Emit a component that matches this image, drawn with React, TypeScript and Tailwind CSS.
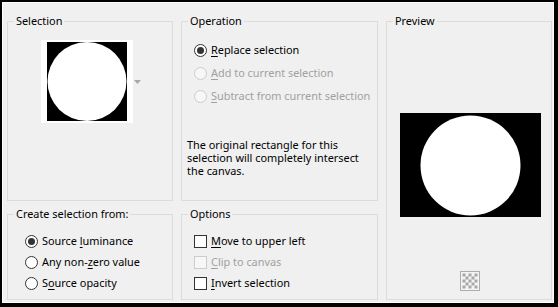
import type { ReactNode } from 'react';

const Radio = ({ checked, disabled }: { checked?: boolean; disabled?: boolean }) => (
    <span
        className={
            disabled
                ? 'flex items-center justify-center w-[13px] h-[13px] shrink-0 rounded-full border border-[#cccccc] bg-[#f7f7f7]'
                : 'flex items-center justify-center w-[13px] h-[13px] shrink-0 rounded-full border border-[#333333] bg-white'
        }
    >
        {checked && <span className="w-[7px] h-[7px] rounded-full bg-[#333333]" />}
    </span>
);

const Check = ({ disabled }: { disabled?: boolean }) => (
    <span
        className={
            disabled
                ? 'w-[13px] h-[13px] shrink-0 border border-[#cccccc] bg-[#f7f7f7]'
                : 'w-[13px] h-[13px] shrink-0 border border-[#333333] bg-white'
        }
    />
);

// label with its access key underlined
const Label = ({ pre, key_, post, disabled }: { pre: string; key_: string; post: string; disabled?: boolean }) => (
    <span className={disabled ? 'text-[#a0a0a0] whitespace-nowrap' : 'text-black whitespace-nowrap'}>
        {pre}
        <u className="underline-offset-[2px]">{key_}</u>
        {post}
    </span>
);

const Row = ({ h, control, children }: { h: string; control: ReactNode; children: ReactNode }) => (
    <div className={`flex items-center gap-[4px] ${h}`}>
        {control}
        {children}
    </div>
);

const Group = ({ title, className, children }: { title: string; className: string; children: ReactNode }) => (
    <fieldset className={`border border-[#dcdcdc] ${className}`}>
        <legend className="ml-[6px] px-[2px] leading-[16px] text-black">{title}</legend>
        {children}
    </fieldset>
);

const Checker = () => {
    const cells = [];
    for (let r = 0; r < 5; r++) {
        for (let c = 0; c < 5; c++) {
            if ((r + c) % 2 === 0) {
                cells.push(<rect key={`${r}-${c}`} x={2.5 + c * 3} y={2.5 + r * 3} width={3} height={3} fill="#a8a8a8" />);
            }
        }
    }
    return (
        <svg width="20" height="20" viewBox="0 0 20 20">
            <rect x="0.5" y="0.5" width="19" height="19" fill="#f4f4f4" stroke="#adadad" />
            {cells}
        </svg>
    );
};

const App = () => {
    return (
        <div className="w-[558px] h-[307px] border-black border-t-2 border-l-2 border-r-4 border-b-4 bg-white font-['Noto_Sans',sans-serif] text-[10.9px]">
            <div className="h-full border border-white bg-[#f0f0f0] flex gap-[8px] pl-[4px] pt-[10px]">
                {/* left column */}
                <div className="flex flex-col gap-[5px] w-[166px]">
                    <Group title="Selection" className="h-[188px]">
                        <div className="flex items-center mt-[11px] ml-[33px]">
                            <div className="bg-white px-[6px] py-[2px]">
                                <svg width="80" height="79" viewBox="0 0 80 79" className="block">
                                    <rect width="80" height="79" fill="#000" />
                                    <circle cx="40" cy="39.5" r="39.5" fill="#fff" />
                                </svg>
                            </div>
                            <svg width="7" height="4" viewBox="0 0 7 4" className="ml-[1px]">
                                <path d="M0 0 L7 0 L3.5 4 Z" fill="#a8a8a8" />
                            </svg>
                        </div>
                    </Group>
                    <Group title="Create selection from:" className="h-[94px]">
                        <div className="flex flex-col mt-[9px] pl-[17px]">
                            <Row h="h-[21px]" control={<Radio checked />}>
                                <Label pre="Source " key_="l" post="uminance" />
                            </Row>
                            <Row h="h-[21px]" control={<Radio />}>
                                <Label pre="Any non-" key_="z" post="ero value" />
                            </Row>
                            <Row h="h-[21px]" control={<Radio />}>
                                <Label pre="S" key_="o" post="urce opacity" />
                            </Row>
                        </div>
                    </Group>
                </div>

                {/* middle column */}
                <div className="flex flex-col gap-[5px] w-[197px]">
                    <Group title="Operation" className="h-[188px]">
                        <div className="flex flex-col mt-[10px] pl-[12px]">
                            <Row h="h-[23px]" control={<Radio checked />}>
                                <Label pre="" key_="R" post="eplace selection" />
                            </Row>
                            <Row h="h-[23px]" control={<Radio disabled />}>
                                <Label pre="" key_="A" post="dd to current selection" disabled />
                            </Row>
                            <Row h="h-[23px]" control={<Radio disabled />}>
                                <Label pre="" key_="S" post="ubtract from current selection" disabled />
                            </Row>
                        </div>
                        <p className="mt-[30px] pl-[5px] leading-[13px] text-black whitespace-nowrap">
                            The original rectangle for this
                            <br />
                            selection will completely intersect
                            <br />
                            the canvas.
                        </p>
                    </Group>
                    <Group title="Options" className="h-[94px]">
                        <div className="flex flex-col mt-[9px] pl-[12px]">
                            <Row h="h-[21px]" control={<Check />}>
                                <Label pre="" key_="M" post="ove to upper left" />
                            </Row>
                            <Row h="h-[21px]" control={<Check disabled />}>
                                <Label pre="" key_="C" post="lip to canvas" disabled />
                            </Row>
                            <Row h="h-[21px]" control={<Check />}>
                                <Label pre="" key_="I" post="nvert selection" />
                            </Row>
                        </div>
                    </Group>
                </div>

                {/* right column */}
                <div className="w-[166px]">
                    <Group title="Preview" className="h-[287px]">
                        <div className="flex flex-col items-center mt-[84px]">
                            <svg width="141" height="104" viewBox="0 0 141 104" className="block ml-[2px]">
                                <rect width="141" height="104" fill="#000" />
                                <circle cx="70.5" cy="52.5" r="50" fill="#fff" />
                            </svg>
                            <div className="mt-[54px] ml-[1px]">
                                <Checker />
                            </div>
                        </div>
                    </Group>
                </div>
            </div>
        </div>
    );
};

export default App;
